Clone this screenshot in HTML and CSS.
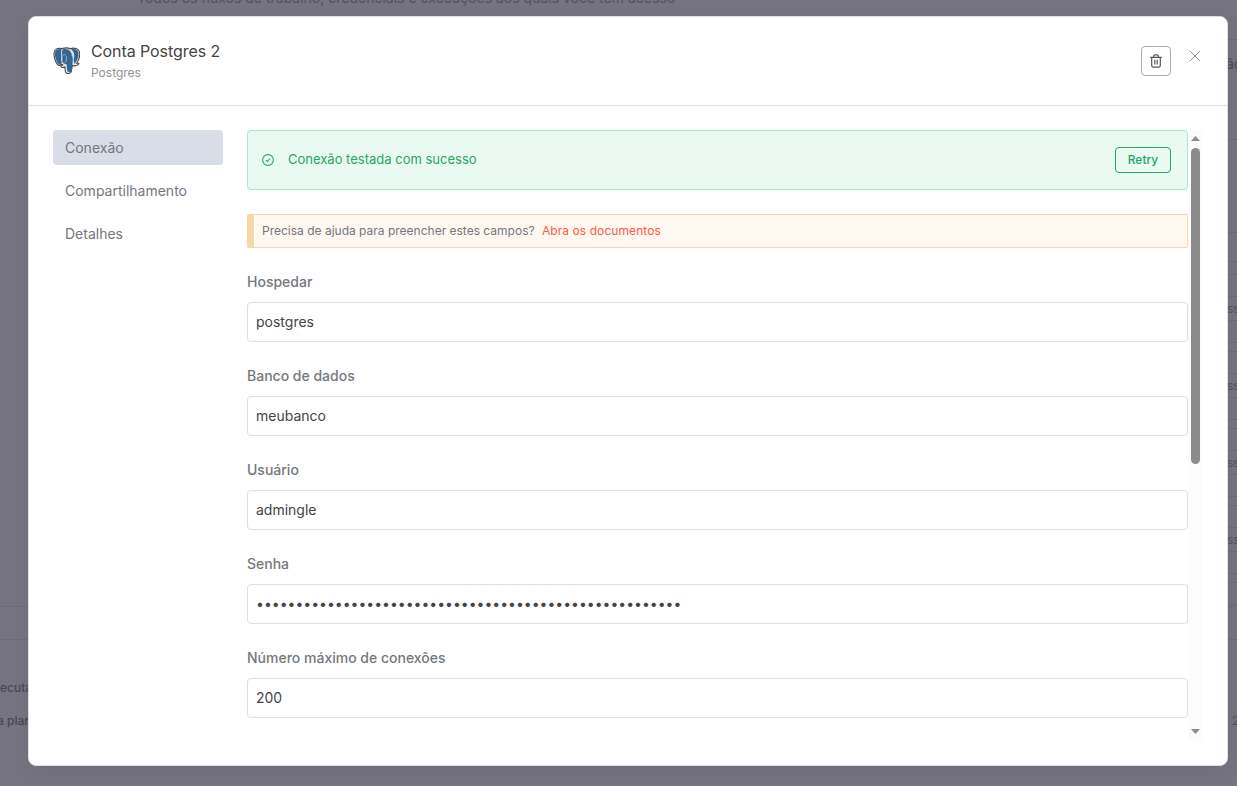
FILE: index.html
```html
<!DOCTYPE html>
<html lang="pt-BR">
<head>
<meta charset="utf-8">
<title>Conta Postgres 2</title>
<link rel="stylesheet" href="styles.css">
</head>
<body>
<div class="page">
  <div class="page-left">
    <div class="left-fill"></div>
    <div class="left-band"></div>
    <div class="left-line">ecuta</div>
    <div class="left-line second">a plan</div>
  </div>
  <div class="page-main">Todos os fluxos de trabalho, credenciais e execuções aos quais você tem acesso</div>
  <div class="page-right">
    <div class="top-band"><span>ão</span></div>
    <div class="filter-band"></div>
    <div class="search-band"></div>
    <div class="row"><div class="badge">ss</div></div>
    <div class="row"><div class="badge">ss</div></div>
    <div class="row"><div class="badge">ss</div></div>
    <div class="row"><div class="badge">ss</div></div>
    <div class="row cut"></div>
    <div class="log-band"></div>
    <div class="count">2</div>
  </div>
</div>
<div class="modal">
  <header class="header">
    <svg class="logo" viewBox="0 0 28 28" width="27" height="27">
      <path d="M9 1.600C5 .5 1.300 2 1 6.500c-.2 4 1.800 9.500 3.700 11.800 1.400 1.700 3 .8 4.100-.5l1.300.7c-.7.8-2 1-2 1.700.2 1.200 2.700 1.200 4.200.5.200 2.200.1 4.200 1 5.700 1 1.700 4.900 1.500 5.700-.9.6-1.900.7-4.200.8-6.200 2.300.5 5.500.1 7-1.700.5-.8-.4-1-2.200-.7 2.200-3.200 3.600-8 2.900-11.500C26.800 1.700 21.600.4 18.200 1.700 15.200.5 12.500.7 9 1.600Z" fill="#dfe6ec" stroke="#444" stroke-width="1.100"/>
      <path d="M9 2.500C5.400 1.500 2.200 2.500 2 6.600c-.2 3.700 1.500 8.500 3.400 11 1.100 1.500 2.500.3 3.700-1.300-1-2.700-.6-4.700-.5-7.200C8.700 7 8 4.800 9 2.500Z" fill="#336791"/>
      <path d="M9.800 2.600c3-.9 6.400-.7 8.400 2.200 2 3 2.500 7 2.300 10-.3 3.200-.5 6.800-1.100 9.700-.6 1.800-3.700 1.900-4.400.4-.8-2-.7-4.800-.9-7.200-3 .5-4.900-1-4.400-4.700.4-3.600-1-7.400.1-10.400Z" fill="#336791"/>
      <path d="M18.700 2.300c3.900-1 7.600.2 7.800 4.300.2 3.600-1.400 7.700-4 10.900-.8-2.200-1.400-4.100-.8-6.100.7-3 .2-6.700-3-9.100Z" fill="#336791"/>
      <path d="M10.200 8.800c1-.9 2.200-1 3.100-.3M13.700 9.500c.4 2.200.2 4.500-.6 6.500M18.800 8.800c.7-.8 1.500-.8 2.200-.4M10.300 16.500l2.200 1.300" fill="none" stroke="#c6d5e1" stroke-width=".7"/>
    </svg>
    <div class="titles">
      <div class="title">Conta Postgres 2</div>
      <div class="subtitle">Postgres</div>
    </div>
    <button class="delete" aria-label="Excluir">
      <svg viewBox="0 0 12 14" width="12" height="14" fill="none" stroke="#555" stroke-width="1.200">
        <path d="M.3 3.300h11.400M3.700 3.100V2.100Q3.700.8 5 .8h2Q8.300.8 8.300 2.100v1M1.700 3.500v8.100q0 1.500 1.500 1.500h5.600q1.500 0 1.500-1.500V3.500M4.800 5.800v4.700M7.200 5.800v4.700"/>
      </svg>
    </button>
    <button class="close" aria-label="Fechar">
      <svg viewBox="0 0 10 10" width="10" height="10" fill="none" stroke="#85878c" stroke-width="1"><path d="M.2.2l9.600 9.600M9.800.2L.2 9.800"/></svg>
    </button>
  </header>
  <div class="body">
    <nav class="menu">
      <a class="item active">Conexão</a>
      <a class="item">Compartilhamento</a>
      <a class="item">Detalhes</a>
    </nav>
    <div class="content">
      <div class="success">
        <svg viewBox="0 0 12 12" width="12" height="12" fill="none" stroke="#29a568"><circle cx="6" cy="6" r="5.400" stroke-width="1.100"/><path d="M4.100 6.100l1.300 1.300 2.400-2.500" stroke-width="1.200"/></svg>
        <span class="message">Conexão testada com sucesso</span>
        <button class="retry">Retry</button>
      </div>
      <div class="notice">Precisa de ajuda para preencher estes campos? <a class="docs">Abra os documentos</a></div>
      <label class="field"><span class="label">Hospedar</span><span class="input">postgres</span></label>
      <label class="field"><span class="label">Banco de dados</span><span class="input">meubanco</span></label>
      <label class="field"><span class="label">Usuário</span><span class="input">admingle</span></label>
      <label class="field"><span class="label">Senha</span><span class="input">••••••••••••••••••••••••••••••••••••••••••••••••••••••</span></label>
      <label class="field"><span class="label">Número máximo de conexões</span><span class="input">200</span></label>
    </div>
    <div class="scrollbar">
      <div class="arrow up"></div>
      <div class="thumb"></div>
      <div class="arrow down"></div>
    </div>
  </div>
</div>
</body>
</html>
```
FILE: styles.css
```css
* { box-sizing: border-box; }
body {
  margin: 0;
  height: 786px;
  overflow: hidden;
  background: #757380;
  font-family: Inter, sans-serif;
  color: #444;
}
button { font-family: inherit; padding: 0; background: none; border: 0; }

/* Dimmed page behind the dialog */
.page { display: flex; height: 786px; overflow: hidden; color: #53525d; }
.page-left { width: 137px; font-size: 12px; font-weight: 500; color: #484852; line-height: 16px; }
.left-fill { height: 606px; }
.left-band { height: 34px; border-top: 1px solid #696b7b; border-bottom: 1px solid #696b7b; }
.left-line { margin-top: 40px; white-space: nowrap; }
.left-line.second { margin-top: 17px; margin-left: -3px; }
.page-main { flex: 1; margin-top: -12px; font-size: 14px; line-height: 20px; white-space: nowrap; }
.page-right { width: 37px; padding-top: 39px; }
.top-band { height: 101px; padding: 14px 0 0 26px; border-top: 1px solid #696b7b; border-bottom: 1px solid #696b7b; font-size: 14px; line-height: 20px; overflow: hidden; color: #484852; }
.filter-band { height: 93px; border-bottom: 1px solid #696b7b; }
.search-band { height: 29px; border-bottom: 1px solid #696b7b; }
.row { height: 69px; margin: 0 0 8px; padding-top: 21px; border-top: 1px solid #696b7b; border-bottom: 1px solid #696b7b; }
.search-band + .row { margin-top: 12px; }
.badge { height: 25px; padding-left: 27px; border-top: 1px solid #696b7b; border-bottom: 1px solid #696b7b; font-size: 12px; line-height: 23px; overflow: hidden; }
.row.cut { height: 23px; margin-bottom: 1px; }
.log-band { height: 34px; border-top: 1px solid #696b7b; border-bottom: 1px solid #696b7b; }
.count { margin-top: 73px; padding-left: 32px; font-size: 12px; line-height: 16px; overflow: hidden; }

/* Dialog */
.modal {
  position: absolute;
  left: 28px;
  top: 16px;
  width: 1200px;
  height: 750px;
  background: #fff;
  border: 1px solid #dbdfe7;
  border-radius: 8px;
  box-shadow: 0 6px 16px rgba(68, 28, 23, .06);
}
.header { display: flex; height: 89px; padding: 22px 27px 0 23px; border-bottom: 1px solid #dbdfe7; }
.logo { margin-top: 8px; margin-left: .5px; }
.titles { flex: 1; margin-left: 11.5px; }
.title { font-size: 16px; line-height: 24px; letter-spacing: -.08px; }
.subtitle { margin-top: 2px; font-size: 12px; line-height: 16px; color: #909298; }
.delete { display: flex; align-items: center; justify-content: center; width: 30px; height: 30px; margin-top: 7px; border: 1px solid #a9adbb; border-radius: 4px; }
.close { display: flex; width: 10px; height: 10px; margin: 12px 0 0 19px; }
.body { display: flex; height: 635px; padding: 24px 24px 0; }
.menu { width: 170px; margin-right: 24px; }
.item { display: block; height: 35px; margin-bottom: 8px; padding: 0 12px; border-radius: 4px; font-size: 14px; line-height: 36px; color: #75777d; }
.item.active { background: #d9dde8; }
.content { width: 941px; }
.success { display: flex; align-items: center; height: 60px; padding: 0 16px 0 14px; background: #eaf9f2; border: 1px solid #ace8c9; border-radius: 4px; color: #29a568; }
.success svg { margin-bottom: 1px; }
.message { flex: 1; margin: 0 0 2px 14px; font-size: 13px; }
.retry { width: 56px; height: 26px; padding-bottom: 2px; border: 1px solid #29a568; border-radius: 4px; color: #29a568; font-size: 12px; font-weight: 500; }
.notice { height: 34px; margin: 24px 0; padding-left: 8px; background: #fef8f0; border: 1px solid #f5d8aa; border-left-width: 7px; border-radius: 2px; font-size: 12px; line-height: 32px; color: #75777d; }
.docs { margin-left: 4px; color: #ff5a46; letter-spacing: .07px; }
.field { display: block; height: 94px; }
.label { display: block; height: 30px; font-size: 14px; font-weight: 500; line-height: 20px; color: #75777d; }
.input { display: block; height: 40px; padding-left: 8px; border: 1px solid #dbdfe7; border-radius: 4px; font-size: 14px; line-height: 38px; white-space: nowrap; }
.scrollbar { display: flex; flex-direction: column; align-items: center; width: 15px; height: 611px; background: #fcfcfc; }
.arrow { width: 9px; height: 5px; background: #8b8b8b; }
.arrow.up { margin-top: 6px; clip-path: polygon(50% 0, 100% 100%, 0 100%); }
.arrow.down { margin-top: auto; margin-bottom: 7px; clip-path: polygon(0 0, 100% 0, 50% 100%); }
.thumb { width: 9px; height: 316px; margin-top: 7px; border-radius: 5px; background: #8b8b8b; }
```
